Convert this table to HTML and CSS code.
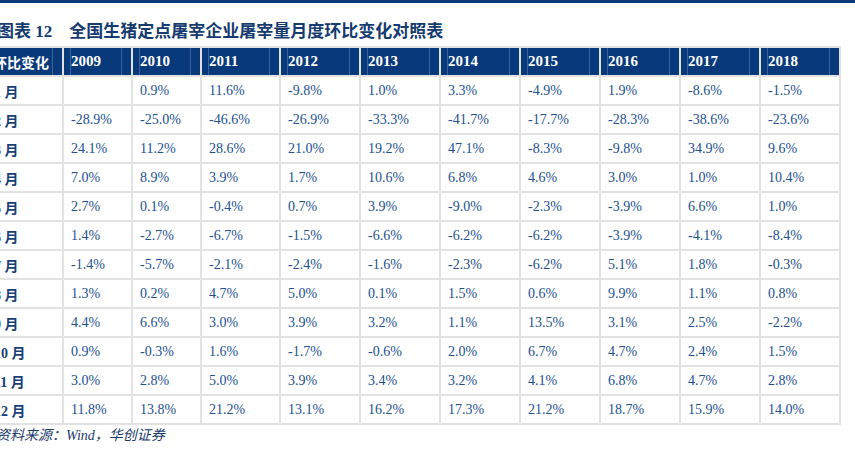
FILE: index.html
```html
<!DOCTYPE html>
<html lang="zh">
<head>
<meta charset="utf-8">
<title>图表 12 全国生猪定点屠宰企业屠宰量月度环比变化对照表</title>
<link rel="stylesheet" href="styles.css">
</head>
<body>
<div class="page">
  <div class="topbar"></div>
  <div class="report">
    <h2 class="caption"><span class="fig">图表 12</span><span class="title">全国生猪定点屠宰企业屠宰量月度环比变化对照表</span></h2>
    <div class="table">
      <div class="cell head first">环比变化</div>
      <div class="cell head">2009</div>
      <div class="cell head">2010</div>
      <div class="cell head">2011</div>
      <div class="cell head">2012</div>
      <div class="cell head">2013</div>
      <div class="cell head">2014</div>
      <div class="cell head">2015</div>
      <div class="cell head">2016</div>
      <div class="cell head">2017</div>
      <div class="cell head">2018</div>

      <div class="cell label">1 月</div><div class="cell"></div><div class="cell">0.9%</div><div class="cell">11.6%</div><div class="cell">-9.8%</div><div class="cell">1.0%</div><div class="cell">3.3%</div><div class="cell">-4.9%</div><div class="cell">1.9%</div><div class="cell">-8.6%</div><div class="cell">-1.5%</div>
      <div class="cell label">2 月</div><div class="cell">-28.9%</div><div class="cell">-25.0%</div><div class="cell">-46.6%</div><div class="cell">-26.9%</div><div class="cell">-33.3%</div><div class="cell">-41.7%</div><div class="cell">-17.7%</div><div class="cell">-28.3%</div><div class="cell">-38.6%</div><div class="cell">-23.6%</div>
      <div class="cell label">3 月</div><div class="cell">24.1%</div><div class="cell">11.2%</div><div class="cell">28.6%</div><div class="cell">21.0%</div><div class="cell">19.2%</div><div class="cell">47.1%</div><div class="cell">-8.3%</div><div class="cell">-9.8%</div><div class="cell">34.9%</div><div class="cell">9.6%</div>
      <div class="cell label">4 月</div><div class="cell">7.0%</div><div class="cell">8.9%</div><div class="cell">3.9%</div><div class="cell">1.7%</div><div class="cell">10.6%</div><div class="cell">6.8%</div><div class="cell">4.6%</div><div class="cell">3.0%</div><div class="cell">1.0%</div><div class="cell">10.4%</div>
      <div class="cell label">5 月</div><div class="cell">2.7%</div><div class="cell">0.1%</div><div class="cell">-0.4%</div><div class="cell">0.7%</div><div class="cell">3.9%</div><div class="cell">-9.0%</div><div class="cell">-2.3%</div><div class="cell">-3.9%</div><div class="cell">6.6%</div><div class="cell">1.0%</div>
      <div class="cell label">6 月</div><div class="cell">1.4%</div><div class="cell">-2.7%</div><div class="cell">-6.7%</div><div class="cell">-1.5%</div><div class="cell">-6.6%</div><div class="cell">-6.2%</div><div class="cell">-6.2%</div><div class="cell">-3.9%</div><div class="cell">-4.1%</div><div class="cell">-8.4%</div>
      <div class="cell label">7 月</div><div class="cell">-1.4%</div><div class="cell">-5.7%</div><div class="cell">-2.1%</div><div class="cell">-2.4%</div><div class="cell">-1.6%</div><div class="cell">-2.3%</div><div class="cell">-6.2%</div><div class="cell">5.1%</div><div class="cell">1.8%</div><div class="cell">-0.3%</div>
      <div class="cell label">8 月</div><div class="cell">1.3%</div><div class="cell">0.2%</div><div class="cell">4.7%</div><div class="cell">5.0%</div><div class="cell">0.1%</div><div class="cell">1.5%</div><div class="cell">0.6%</div><div class="cell">9.9%</div><div class="cell">1.1%</div><div class="cell">0.8%</div>
      <div class="cell label">9 月</div><div class="cell">4.4%</div><div class="cell">6.6%</div><div class="cell">3.0%</div><div class="cell">3.9%</div><div class="cell">3.2%</div><div class="cell">1.1%</div><div class="cell">13.5%</div><div class="cell">3.1%</div><div class="cell">2.5%</div><div class="cell">-2.2%</div>
      <div class="cell label">10 月</div><div class="cell">0.9%</div><div class="cell">-0.3%</div><div class="cell">1.6%</div><div class="cell">-1.7%</div><div class="cell">-0.6%</div><div class="cell">2.0%</div><div class="cell">6.7%</div><div class="cell">4.7%</div><div class="cell">2.4%</div><div class="cell">1.5%</div>
      <div class="cell label">11 月</div><div class="cell">3.0%</div><div class="cell">2.8%</div><div class="cell">5.0%</div><div class="cell">3.9%</div><div class="cell">3.4%</div><div class="cell">3.2%</div><div class="cell">4.1%</div><div class="cell">6.8%</div><div class="cell">4.7%</div><div class="cell">2.8%</div>
      <div class="cell label">12 月</div><div class="cell">11.8%</div><div class="cell">13.8%</div><div class="cell">21.2%</div><div class="cell">13.1%</div><div class="cell">16.2%</div><div class="cell">17.3%</div><div class="cell">21.2%</div><div class="cell">18.7%</div><div class="cell">15.9%</div><div class="cell">14.0%</div>
    </div>
    <p class="source">资料来源：Wind，华创证券</p>
  </div>
</div>
</body>
</html>
```

FILE: styles.css
```css
html, body {
  margin: 0;
  padding: 0;
  background: #ffffff;
}

body {
  width: 855px;
  height: 451px;
  overflow: hidden;
  font-family: "Liberation Serif", "Noto Sans CJK SC", serif;
}

.page {
  width: 855px;
  overflow: hidden;
}

.topbar {
  height: 3px;
  background: #0b3a79;
}

.report {
  margin-left: -16px;
}

.caption {
  margin: 17px 0 3px 0;
  padding-left: 13px;
  height: 23px;
  font-size: 17px;
  line-height: 23px;
  font-weight: 700;
  color: #163b70;
  white-space: nowrap;
}

.caption .title {
  margin-left: 17px;
}

.table {
  display: grid;
  grid-template-columns: 78px 69px 69px 79px repeat(7, 80px);
  width: max-content;
  border-top: 2px solid #e2e2e2;
  border-left: 2px solid #e2e2e2;
}

.cell {
  box-sizing: border-box;
  height: 29px;
  border-right: 2px solid #e2e2e2;
  border-bottom: 2px solid #e2e2e2;
  padding-left: 7px;
  display: flex;
  align-items: center;
  font-size: 14px;
  color: #22508f;
  white-space: nowrap;
}

.head {
  background-color: #083a7b;
  background-image:
    linear-gradient(to right, transparent 6px, rgba(150, 175, 210, 0.35) 6px, rgba(150, 175, 210, 0.35) 7px, transparent 7px),
    linear-gradient(to left, transparent 9px, rgba(150, 175, 210, 0.35) 9px, rgba(150, 175, 210, 0.35) 10px, transparent 10px);
  color: #ffffff;
  font-weight: 700;
  font-size: 15px;
}

.head.first {
  font-size: 14px;
  padding-left: 7px;
}

.label {
  padding-left: 8px;
  font-weight: 700;
  color: #173f78;
}

.source {
  margin: 2px 0 0 0;
  padding-left: 12px;
  font-size: 14px;
  line-height: 18px;
  font-style: italic;
  color: #1b3a6b;
  white-space: nowrap;
}
```
